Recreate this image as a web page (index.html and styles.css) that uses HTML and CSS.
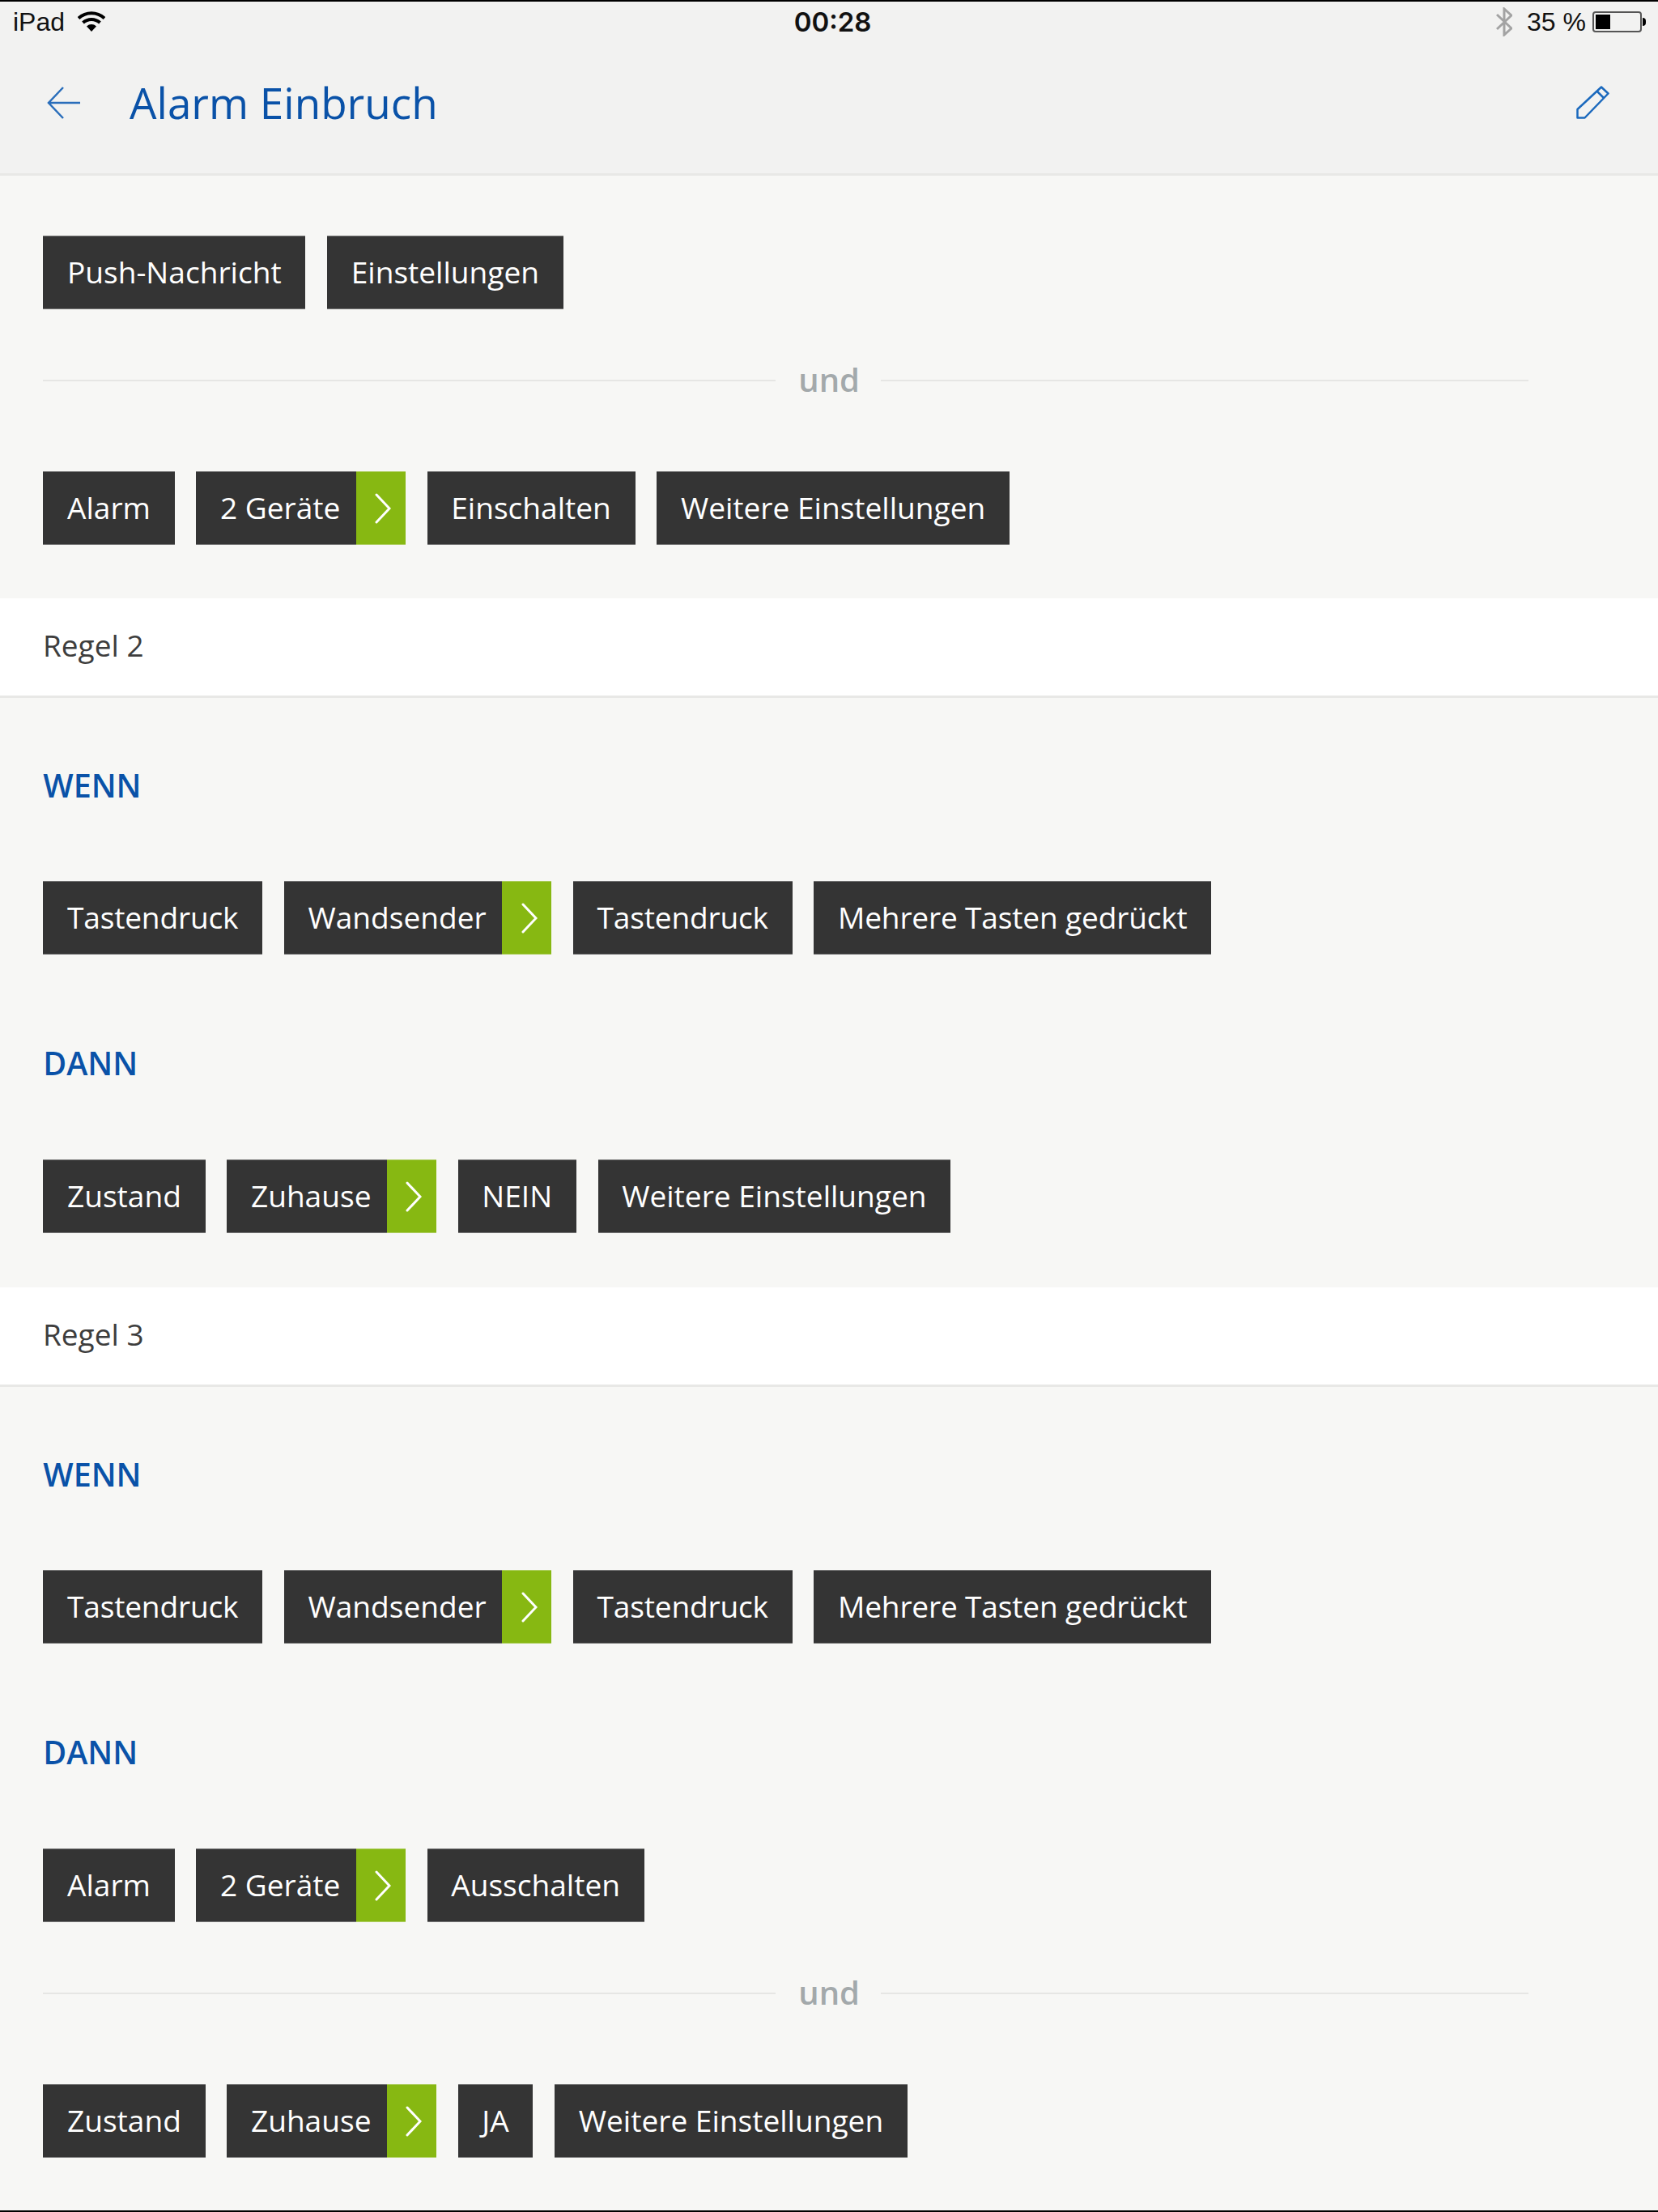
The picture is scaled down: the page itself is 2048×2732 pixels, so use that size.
FILE: index.html
```html
<!DOCTYPE html>
<html lang="de">
<head>
<meta charset="utf-8">
<title>Alarm Einbruch</title>
<link rel="stylesheet" href="styles.css">
</head>
<body>
<header class="top">
  <div class="status">
    <div class="status-left">
      <span>iPad</span>
      <svg class="wifi" width="34" height="26" viewBox="0 0 34 26"><path d="M1 8.500C10 0 24 0 33 8.500" fill="none" stroke="#000" stroke-width="4"/><path d="M6.500 14C12.500 8.500 21.500 8.500 27.500 14" fill="none" stroke="#000" stroke-width="4"/><path d="M11 18.500C14.500 15.200 19.500 15.200 23 18.500L17 25Z" fill="#000"/></svg>
    </div>
    <div class="clock">00:28</div>
    <div class="status-right">
      <svg class="bt" width="20" height="36" viewBox="0 0 20 36"><path d="M1 9L19 26L10 34V2L19 10L1 27" fill="none" stroke="#a3a3a3" stroke-width="3"/></svg>
      <span class="pct">35 %</span>
      <span class="battery"><span class="battery-fill"></span></span>
      <span class="battery-nub"></span>
    </div>
  </div>
  <div class="titlebar">
    <svg class="back" width="42" height="42" viewBox="0 0 42 42"><path d="M41 21H2M20 2L2 21L20 40" fill="none" stroke="#2a6ebb" stroke-width="2.500"/></svg>
    <h1>Alarm Einbruch</h1>
    <svg class="edit" width="42" height="42" viewBox="0 0 42 42"><path d="M1.500 29L31 1.500L39.500 9.500L10.500 39.500H1.500ZM25.500 6.500L34.500 15.500" fill="none" stroke="#1b69bd" stroke-width="2.500" stroke-linejoin="round"/></svg>
  </div>
</header>

<main>
  <section class="rule rule-first">
    <div class="tags">
      <span class="tag">Push-Nachricht</span>
      <span class="tag">Einstellungen</span>
    </div>
    <div class="und"><span>und</span></div>
    <div class="tags">
      <span class="tag">Alarm</span>
      <span class="tag tag-more">2 Geräte<span class="go"><svg width="20" height="38" viewBox="0 0 20 38"><path d="M2 2L18 19L2 36" fill="none" stroke="#fff" stroke-width="3" stroke-linecap="round"/></svg></span></span>
      <span class="tag">Einschalten</span>
      <span class="tag">Weitere Einstellungen</span>
    </div>
  </section>

  <div class="rule-title">Regel 2</div>
  <section class="rule">
    <h2>WENN</h2>
    <div class="tags">
      <span class="tag tag-tight">Tastendruck</span>
      <span class="tag tag-more">Wandsender<span class="go"><svg width="20" height="38" viewBox="0 0 20 38"><path d="M2 2L18 19L2 36" fill="none" stroke="#fff" stroke-width="3" stroke-linecap="round"/></svg></span></span>
      <span class="tag tag-tight">Tastendruck</span>
      <span class="tag tag-tight">Mehrere Tasten gedrückt</span>
    </div>
    <h2 class="then">DANN</h2>
    <div class="tags">
      <span class="tag">Zustand</span>
      <span class="tag tag-more">Zuhause<span class="go"><svg width="20" height="38" viewBox="0 0 20 38"><path d="M2 2L18 19L2 36" fill="none" stroke="#fff" stroke-width="3" stroke-linecap="round"/></svg></span></span>
      <span class="tag">NEIN</span>
      <span class="tag">Weitere Einstellungen</span>
    </div>
  </section>

  <div class="rule-title">Regel 3</div>
  <section class="rule">
    <h2>WENN</h2>
    <div class="tags">
      <span class="tag tag-tight">Tastendruck</span>
      <span class="tag tag-more">Wandsender<span class="go"><svg width="20" height="38" viewBox="0 0 20 38"><path d="M2 2L18 19L2 36" fill="none" stroke="#fff" stroke-width="3" stroke-linecap="round"/></svg></span></span>
      <span class="tag tag-tight">Tastendruck</span>
      <span class="tag tag-tight">Mehrere Tasten gedrückt</span>
    </div>
    <h2 class="then">DANN</h2>
    <div class="tags">
      <span class="tag">Alarm</span>
      <span class="tag tag-more">2 Geräte<span class="go"><svg width="20" height="38" viewBox="0 0 20 38"><path d="M2 2L18 19L2 36" fill="none" stroke="#fff" stroke-width="3" stroke-linecap="round"/></svg></span></span>
      <span class="tag">Ausschalten</span>
    </div>
    <div class="und"><span>und</span></div>
    <div class="tags">
      <span class="tag">Zustand</span>
      <span class="tag tag-more">Zuhause<span class="go"><svg width="20" height="38" viewBox="0 0 20 38"><path d="M2 2L18 19L2 36" fill="none" stroke="#fff" stroke-width="3" stroke-linecap="round"/></svg></span></span>
      <span class="tag">JA</span>
      <span class="tag">Weitere Einstellungen</span>
    </div>
  </section>
</main>
</body>
</html>
```
FILE: styles.css
```css
* { box-sizing: border-box; }
html, body { margin: 0; padding: 0; }
body {
  width: 2048px;
  height: 2732px;
  overflow: hidden;
  background: #f7f7f5;
  border-bottom: 2px solid #000;
  font-family: "Open Sans", sans-serif;
  color: #333;
}
.top {
  height: 217px;
  background: #f2f2f1;
  border-top: 2px solid #000;
  border-bottom: 3px solid #e8e8e6;
}
.status {
  height: 50px;
  padding: 0 15px 0 16px;
  display: grid;
  grid-template-columns: 1fr auto 1fr;
  align-items: center;
  font-family: "Liberation Sans", sans-serif;
  font-size: 32px;
  color: #111;
}
.status-left { display: flex; align-items: center; gap: 16px; }
.clock {
  margin-left: 8px;
  font-family: "Inter", sans-serif;
  font-weight: 600;
  font-size: 33px;
}
.status-right { display: flex; align-items: center; justify-content: flex-end; }
.bt { margin-right: 18px; }
.pct { margin-right: 8px; }
.battery {
  display: block;
  width: 61px;
  height: 26px;
  padding: 2px;
  border: 2px solid #555;
  border-radius: 4px;
}
.battery-fill { display: block; width: 18px; height: 100%; background: #000; }
.battery-nub {
  width: 4px;
  height: 10px;
  margin-left: 1px;
  background: #000;
  border-radius: 0 4px 4px 0;
}
.titlebar {
  height: 150px;
  padding: 0 59px 0 58px;
  display: flex;
  align-items: center;
}
.titlebar h1 {
  flex: 1;
  margin: 0 0 2px 60px;
  font-size: 53px;
  font-weight: 400;
  color: #0a52a8;
}
.rule { padding: 78px 0 67px 53.3px; }
.rule-first { padding-top: 74px; padding-bottom: 66px; }
.rule-title {
  height: 123px;
  padding: 0 0 5px 53px;
  display: flex;
  align-items: center;
  background: #fff;
  border-bottom: 3px solid #e8e8e6;
  font-size: 37px;
  color: #3d3d3d;
}
.rule h2 {
  height: 60px;
  margin: 0 0 88px;
  font-size: 39.5px;
  line-height: 60px;
  font-weight: 600;
  color: #0a52a8;
}
.rule h2.then { margin: 104px 0 89px; }
.tags { display: flex; gap: 26.7px; }
.tag {
  height: 91px;
  padding: 0 29.7px 3px;
  display: flex;
  align-items: center;
  background: #343434;
  border-block: 1px solid rgba(247, 247, 245, 0.35);
  font-size: 37.1px;
  color: #fff;
}
.tag-tight { letter-spacing: -0.17px; }
.tag-more { padding-right: 0; }
.go {
  align-self: stretch;
  width: 61px;
  margin: -1px 0 -4px 19.5px;
  padding-left: 6px;
  display: flex;
  align-items: center;
  justify-content: center;
  background: #87b812;
  border-block: 1px solid rgba(247, 247, 245, 0.35);
}
.und {
  width: 1835px;
  height: 200px;
  padding-bottom: 24px;
  display: flex;
  align-items: center;
  gap: 28px;
  font-size: 40px;
  font-weight: 600;
  color: #a3a9ab;
}
.und span { width: 74px; margin-bottom: 4px; }
.und::before, .und::after {
  content: "";
  flex: 1;
  height: 2px;
  background: #e6e6e4;
}
.und::after { flex: 0 0 800px; }
```
